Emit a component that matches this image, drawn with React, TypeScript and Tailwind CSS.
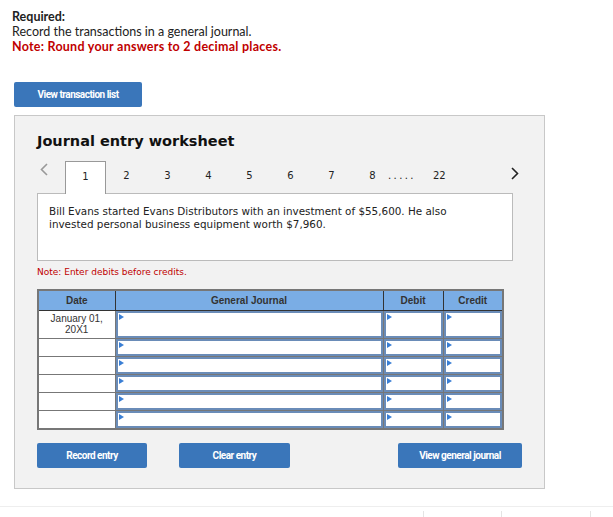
import React from 'react';

const tabs = ['1', '2', '3', '4', '5', '6', '7', '8'];

function Arrow() {
  return (
    <span className="absolute left-[1px] top-[1px] h-0 w-0 border-y-[3px] border-l-[5px] border-y-transparent border-l-[#3a7fd5]" />
  );
}

function InputCell({ tall }: { tall?: boolean }) {
  return (
    <td className="border border-[#777] p-0">
      <div className={`relative w-full border-2 border-[#6a8cb8] bg-white ${tall ? 'h-[27px]' : 'h-[17px]'}`}>
        <Arrow />
      </div>
    </td>
  );
}

function Btn({ children, className }: { children: React.ReactNode; className?: string }) {
  return (
    <button
      className={`h-[25px] rounded-[2px] bg-[#3a76ba] text-[10px] font-bold tracking-[-0.5px] text-white ${className ?? ''}`}
      style={{ fontFamily: 'Roboto, sans-serif' }}
    >
      {children}
    </button>
  );
}

export default function App() {
  return (
    <div className="relative h-[517px] w-[613px] overflow-hidden bg-white">
      {/* Instructions */}
      <div className="pl-3 pt-[9px] text-[12.5px] leading-[15px] text-[#222]" style={{ fontFamily: 'Lato, sans-serif' }}>
        <p className="font-bold">Required:</p>
        <p>Record the transactions in a general journal.</p>
        <p className="font-bold tracking-[0.25px] text-[#c00000]">Note: Round your answers to 2 decimal places.</p>
      </div>

      <div className="ml-[14px] mt-[26px]">
        <Btn className="w-[128px]">View transaction list</Btn>
      </div>

      {/* Worksheet panel */}
      <div
        className="ml-[14px] mt-[8px] h-[374px] w-[531px] border border-[#c8c8c8] bg-[#f2f2f2] pl-[22px] pt-[15px]"
        style={{ fontFamily: '"DejaVu Sans", Verdana, sans-serif' }}
      >
        <h1 className="text-[14.5px] font-bold leading-[20px] text-[#111]">Journal entry worksheet</h1>

        {/* Tabs */}
        <div className="mt-[10px] flex h-[32px] items-start">
          <div className="flex w-[28px] items-center pl-[3px] pt-[2px] text-[#999]">
            <svg width="8" height="13" viewBox="0 0 8 13" fill="none">
              <path d="M7 1L1.5 6.5L7 12" stroke="currentColor" strokeWidth="1.6" />
            </svg>
          </div>
          {tabs.map((t, i) => (
            <div
              key={t}
              className={`flex h-[33px] w-[41px] justify-center pt-[7px] text-[10px] text-[#222] ${
                i === 0 ? 'relative z-10 border border-b-0 border-[#999] bg-white' : ''
              }`}
            >
              {t}
            </div>
          ))}
          <div className="ml-[-5px] w-[45px] pt-[7px] text-[10px] tracking-[2.4px] text-[#222]">.....</div>
          <div className="w-[24px] pt-[7px] text-[10px] text-[#222]">22</div>
          <div className="ml-[54px] pt-[6px] text-[#222]">
            <svg width="8" height="13" viewBox="0 0 8 13" fill="none">
              <path d="M1 1L6.5 6.5L1 12" stroke="currentColor" strokeWidth="1.6" />
            </svg>
          </div>
        </div>

        {/* Problem text */}
        <div className="h-[68px] w-[476px] border border-[#bbb] bg-white px-[11px] pt-[11px] text-[10.4px] leading-[13px] text-[#222]">
          Bill Evans started Evans Distributors with an investment of $55,600. He also
          <br />
          invested personal business equipment worth $7,960.
        </div>

        <p className="mt-[5px] text-[9px] leading-[12px] text-[#c00000]">Note: Enter debits before credits.</p>

        {/* Journal table */}
        <table
          className="mt-[11px] border-collapse border-2 border-[#777] text-[10px] text-[#333]"
          style={{ fontFamily: '"Liberation Sans", Arial, sans-serif' }}
        >
          <thead>
            <tr className="h-[20px] bg-[#7aade5] font-bold">
              <th className="w-[77px] border border-[#333] font-bold">Date</th>
              <th className="w-[268px] border border-[#333] font-bold">General Journal</th>
              <th className="w-[60px] border border-[#333] font-bold">Debit</th>
              <th className="w-[60px] border border-[#333] font-bold">Credit</th>
            </tr>
          </thead>
          <tbody>
            <tr>
              <td className="border border-[#777] bg-white px-1 pt-[2px] align-top text-center leading-[11px]">
                January 01,
                <br />
                20X1
              </td>
              <InputCell tall />
              <InputCell tall />
              <InputCell tall />
            </tr>
            {[0, 1, 2, 3, 4].map((r) => (
              <tr key={r}>
                <td className="border border-[#777] bg-white" />
                <InputCell />
                <InputCell />
                <InputCell />
              </tr>
            ))}
          </tbody>
        </table>

        {/* Actions */}
        <div className="mt-[13px] flex">
          <Btn className="w-[110px]">Record entry</Btn>
          <Btn className="ml-[32px] w-[111px]">Clear entry</Btn>
          <Btn className="ml-[108px] w-[124px]">View general journal</Btn>
        </div>
      </div>

      {/* Footer strip */}
      <div className="mt-[17px] flex h-[11px] border-t border-[#eee]">
        <div className="w-[423px]" />
        <div className="mt-[4px] w-[78px] border-l border-[#e4e4e4]" />
        <div className="mt-[4px] w-[89px] border-l border-[#e4e4e4]" />
        <div className="mt-[4px] flex-1 border-l border-[#e4e4e4]" />
      </div>
    </div>
  );
}
